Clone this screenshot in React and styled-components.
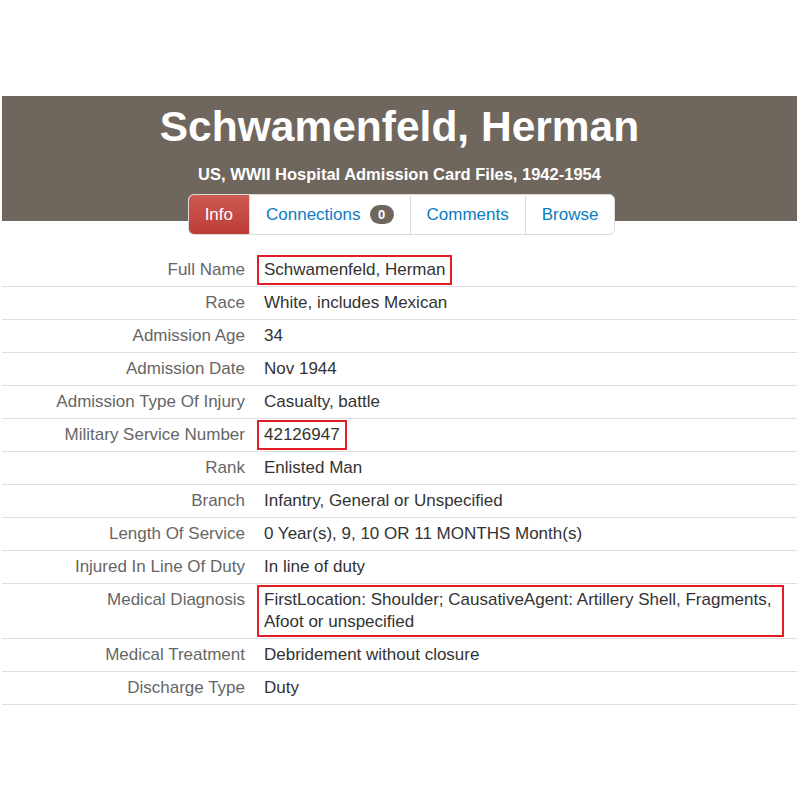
import React from 'react';
import styled, { createGlobalStyle } from 'styled-components';

const GlobalStyle = createGlobalStyle`
  html, body {
    margin: 0;
    background: #fff;
  }
  body {
    font-family: "Liberation Sans", Arial, sans-serif;
  }
`;

const Page = styled.div`
  padding: 96px 3px 0 2px;
`;

// Brown banner with the record title, collection name and the tab strip
const Banner = styled.header`
  background: #6f675e;
  padding-top: 8px;
  display: flex;
  flex-direction: column;
  align-items: center;
  color: #fff;
`;

const Title = styled.h1`
  margin: 0;
  font-size: 42.5px;
  line-height: 46px;
  font-weight: 700;
`;

const Subtitle = styled.h2`
  margin: 14px 0 0;
  font-size: 16.5px;
  line-height: 20px;
  font-weight: 700;
`;

const Tabs = styled.nav`
  display: flex;
  margin: 10px 0 -14px 4px;
  background: #fff;
  border: 1px solid #dcdcdc;
  border-radius: 6px;
  overflow: hidden;
`;

const Tab = styled.a`
  display: flex;
  align-items: center;
  gap: 9px;
  height: 39px;
  padding: 0 16px;
  font-size: 17px;
  text-decoration: none;
  color: ${p => (p.$active ? '#fff' : '#0a7cc1')};
  background: ${p => (p.$active ? 'linear-gradient(#cd5a52, #bb3d36)' : '#fff')};
  & + & {
    border-left: 1px solid #dcdcdc;
  }
`;

const Badge = styled.span`
  display: inline-flex;
  align-items: center;
  justify-content: center;
  min-width: 24px;
  height: 19px;
  border-radius: 10px;
  background: #6f675e;
  color: #fff;
  font-size: 13px;
  font-weight: 700;
`;

// Field / value table
const Fields = styled.div`
  margin-top: 33px;
`;

const Row = styled.div`
  display: grid;
  grid-template-columns: 255px 1fr;
  padding: 1px 13px 1px 0;
  border-bottom: 1px solid #dedede;
  font-size: 17px;
  line-height: 22px;
`;

const Label = styled.div`
  padding: 4px 12px 4px 0;
  text-align: right;
  color: #666;
`;

const Value = styled.div`
  padding: ${p => (p.$marked ? '2px 5px' : '4px 7px')};
  color: #333;
  justify-self: start;
  border: ${p => (p.$marked ? '2px solid #e31d25' : 'none')};
`;

const fields = [
  { label: 'Full Name', value: 'Schwamenfeld, Herman', marked: true },
  { label: 'Race', value: 'White, includes Mexican' },
  { label: 'Admission Age', value: '34' },
  { label: 'Admission Date', value: 'Nov 1944' },
  { label: 'Admission Type Of Injury', value: 'Casualty, battle' },
  { label: 'Military Service Number', value: '42126947', marked: true },
  { label: 'Rank', value: 'Enlisted Man' },
  { label: 'Branch', value: 'Infantry, General or Unspecified' },
  { label: 'Length Of Service', value: '0 Year(s), 9, 10 OR 11 MONTHS Month(s)' },
  { label: 'Injured In Line Of Duty', value: 'In line of duty' },
  {
    label: 'Medical Diagnosis',
    value: 'FirstLocation: Shoulder; CausativeAgent: Artillery Shell, Fragments, Afoot or unspecified',
    marked: true,
  },
  { label: 'Medical Treatment', value: 'Debridement without closure' },
  { label: 'Discharge Type', value: 'Duty' },
];

export default function App() {
  return (
    <Page>
      <GlobalStyle />
      <Banner>
        <Title>Schwamenfeld, Herman</Title>
        <Subtitle>US, WWII Hospital Admission Card Files, 1942-1954</Subtitle>
        <Tabs>
          <Tab $active>Info</Tab>
          <Tab>
            Connections <Badge>0</Badge>
          </Tab>
          <Tab>Comments</Tab>
          <Tab>Browse</Tab>
        </Tabs>
      </Banner>
      <Fields>
        {fields.map(f => (
          <Row key={f.label}>
            <Label>{f.label}</Label>
            <Value $marked={f.marked}>{f.value}</Value>
          </Row>
        ))}
      </Fields>
    </Page>
  );
}
